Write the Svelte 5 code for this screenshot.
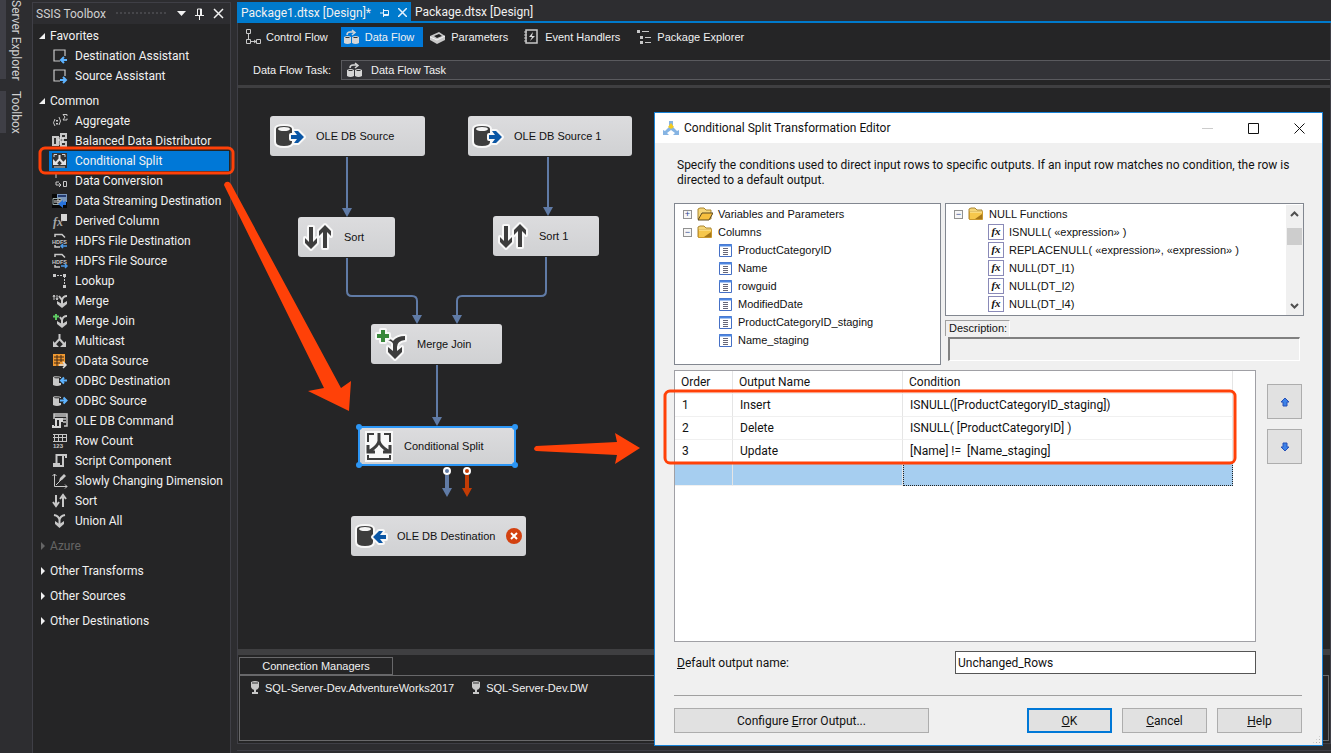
<script>
  const favorites = [
    { name: 'Destination Assistant', icon: 'destAssistant' },
    { name: 'Source Assistant', icon: 'sourceAssistant' }
  ];

  const common = [
    { name: 'Aggregate', icon: 'aggregate' },
    { name: 'Balanced Data Distributor', icon: 'balanced' },
    { name: 'Conditional Split', icon: 'split' },
    { name: 'Data Conversion', icon: 'conversion' },
    { name: 'Data Streaming Destination', icon: 'streaming' },
    { name: 'Derived Column', icon: 'derived' },
    { name: 'HDFS File Destination', icon: 'hdfsDest' },
    { name: 'HDFS File Source', icon: 'hdfsSource' },
    { name: 'Lookup', icon: 'lookup' },
    { name: 'Merge', icon: 'merge' },
    { name: 'Merge Join', icon: 'mergeJoin' },
    { name: 'Multicast', icon: 'multicast' },
    { name: 'OData Source', icon: 'odata' },
    { name: 'ODBC Destination', icon: 'odbcDest' },
    { name: 'ODBC Source', icon: 'odbcSource' },
    { name: 'OLE DB Command', icon: 'command' },
    { name: 'Row Count', icon: 'rowCount' },
    { name: 'Script Component', icon: 'script' },
    { name: 'Slowly Changing Dimension', icon: 'dimension' },
    { name: 'Sort', icon: 'sort' },
    { name: 'Union All', icon: 'union' }
  ];

  let groups = $state([
    { title: 'Favorites', open: true, items: favorites },
    { title: 'Common', open: true, items: common },
    { title: 'Azure', open: false, disabled: true, items: [] },
    { title: 'Other Transforms', open: false, items: [] },
    { title: 'Other Sources', open: false, items: [] },
    { title: 'Other Destinations', open: false, items: [] }
  ]);
  let selected = $state('Conditional Split');

  const views = [
    { name: 'Control Flow', icon: 'controlFlow' },
    { name: 'Data Flow', icon: 'dataFlow' },
    { name: 'Parameters', icon: 'parameters' },
    { name: 'Event Handlers', icon: 'events' },
    { name: 'Package Explorer', icon: 'explorer' }
  ];
  let view = $state('Data Flow');

  // positions on the design surface
  const nodes = [
    { name: 'OLE DB Source', icon: 'bigSource', x: 32, y: 28, w: 155 },
    { name: 'OLE DB Source 1', icon: 'bigSource', x: 230, y: 28, w: 164 },
    { name: 'Sort', icon: 'bigSort', x: 60, y: 129, w: 97 },
    { name: 'Sort 1', icon: 'bigSort', x: 255, y: 128, w: 106 },
    { name: 'Merge Join', icon: 'bigMerge', x: 133, y: 236, w: 131 },
    { name: 'Conditional Split', icon: 'bigSplit', x: 120, y: 338, w: 158, active: true },
    { name: 'OLE DB Destination', icon: 'bigDest', x: 113, y: 428, w: 175, error: true }
  ];

  const columns = ['ProductCategoryID', 'Name', 'rowguid', 'ModifiedDate', 'ProductCategoryID_staging', 'Name_staging'];
  const functions = ['ISNULL( «expression» )', 'REPLACENULL( «expression», «expression» )', 'NULL(DT_I1)', 'NULL(DT_I2)', 'NULL(DT_I4)'];
  const outputs = [
    { order: 1, name: 'Insert', condition: 'ISNULL([ProductCategoryID_staging])' },
    { order: 2, name: 'Delete', condition: 'ISNULL( [ProductCategoryID] )' },
    { order: 3, name: 'Update', condition: '[Name] !=  [Name_staging]' }
  ];
  let defaultOutput = $state('Unchanged_Rows');

  const hdfs = '<path d="M3 4V1.500h7l3 3M3 12v2h5" fill="none" stroke="#c8c8c8" stroke-width="1.5"/><text x="0" y="10.5" font-family="Liberation Sans" font-weight="bold" font-size="5.5" fill="#c8c8c8">HDFS</text>';
  const smallDrum = '<path d="M1 4q3-2 8 0v8q-4 2-8 0z" fill="#c8c8c8"/><ellipse cx="5" cy="4.5" rx="3" ry="1" fill="#555"/>';
  const blueLeft = '<path d="M7 5h9v5H7z" fill="#252526"/><path d="M15 7.500h-5M12 4.500l-3 3 3 3" fill="none" stroke="#5db3ff" stroke-width="2"/>';
  const blueRight = '<path d="M7 5h9v5H7z" fill="#252526"/><path d="M8 7.500h6M11.500 4.500l3 3-3 3" fill="none" stroke="#5db3ff" stroke-width="2"/>';
  const twoDrums = '<path d="M0 8q3.500-2 7 0v6q-3.500 2-7 0zM8 8q3.500-2 7 0v6q-3.500 2-7 0z" fill="#d6d6d6"/><path d="M1.500 8.500h4M9.500 8.500h4" stroke="#333"/><path d="M3 6q0-3 3-3h4M8 1l3 2.500L8 6" fill="none" stroke="#d6d6d6" stroke-width="1.500"/>';

  const icons = {
    destAssistant: '<path d="M8 13H2V2h11v6" fill="none" stroke="#c8c8c8" stroke-width="1.2"/><path d="M15 12h-5M12 9l-3 3 3 3" fill="none" stroke="#5db3ff" stroke-width="2"/>',
    sourceAssistant: '<path d="M8 13H2V2h11v6" fill="none" stroke="#c8c8c8" stroke-width="1.2"/><path d="M8 12h5M11 9l3 3-3 3" fill="none" stroke="#5db3ff" stroke-width="2"/>',
    aggregate: '<path d="M3 6q-3 4 0 7M7 4q3 4 0 8" fill="none" stroke="#c8c8c8"/><path d="M4 7h2v1.500H4zM4 10h2v1.500H4z" fill="#c8c8c8"/><path d="M15 3V1.500h-4L13 4l-2 3h4V5.500" fill="none" stroke="#c8c8c8"/>',
    balanced: '<path d="M0 3h7v10H0zM8 0h7v6H8zM8 8h7v6H8z" fill="#c8c8c8"/><path d="M2 5h2v6H2zM10 2h3v2h-3zM10 10h3v2h-3z" fill="#333"/><path d="M6 7h6M11 5v5M8 4v8" stroke="#eee"/>',
    split: '<path d="M0 0h15v15H0z" fill="#333"/><path d="M2 4V1.500h3M10 1.500h3V4M2 14h11" fill="none" stroke="#d6d6d6"/><path d="M7.500 2v4L4 10M7.500 6L11 10" fill="none" stroke="#e2e2e2" stroke-width="2"/><path d="M1 6v6h6zM14 6v6H8z" fill="#e2e2e2"/>',
    conversion: '<path d="M4 1v4M4 9v3h5M7 10l2 2-2 2M4 9h3" fill="none" stroke="#c8c8c8"/><path d="M11.500 8.500h3v5h-3z" fill="none" stroke="#c8c8c8"/>',
    streaming: '<path d="M0 1h15v14H0z" fill="#080808"/><path d="M5 1h10v8H5z" fill="#7997bd"/><path d="M6 3h8" stroke="#243c72" stroke-width="2"/><path d="M1 5.500h8v6H1z" fill="#111" stroke="#9aa"/><path d="M3 7v3M5 7h2v3H5zM8 7v3" fill="none" stroke="#ddd"/><path d="M14 8v4h-3v3l-5-4 5-4v2z" fill="#2873dc"/>',
    derived: '<path d="M9 1h6v7H9z" fill="#d6d6d6"/><text x="1" y="13" font-family="Liberation Serif" font-style="italic" font-weight="bold" font-size="12" fill="#a8a8a8">fx</text>',
    hdfsDest: hdfs + '<path d="M15 13H9M11 11l-2 2 2 2" fill="none" stroke="#4c9be8" stroke-width="1.500"/>',
    hdfsSource: hdfs + '<path d="M9 13h6M13 11l2 2-2 2" fill="none" stroke="#4c9be8" stroke-width="1.500"/>',
    lookup: '<path d="M2 2.500h11M12.500 3v10" stroke="#c8c8c8" stroke-dasharray="2 1"/><path d="M1 1h3v3H1zM11 1h3v3h-3zM11 12h3v3h-3z" fill="#c8c8c8"/>',
    merge: '<path d="M2 7V2M1 4l1-2 1 2M5 2v5M4 5l1 2 1-2" fill="none" stroke="#c8c8c8"/><path d="M7 3l3 4v5M15 3q-4 0-5 4" fill="none" stroke="#c8c8c8" stroke-width="2"/><path d="M5 8l5 3 5-3v3l-5 4-5-4z" fill="#c8c8c8"/>',
    mergeJoin: '<path d="M1 3.500h6M4 1v6" stroke="#5ecb63" stroke-width="2"/><path d="M8 4l2 3v5M15 3q-4 0-5 4" fill="none" stroke="#c8c8c8" stroke-width="2"/><path d="M5 8l5 3 5-3v3l-5 4-5-4z" fill="#c8c8c8"/>',
    multicast: '<path d="M7.500 1v5L3 11M7.500 6L12 11" fill="none" stroke="#c8c8c8" stroke-width="2"/><path d="M1 8v6h6zM14 8v6H8z" fill="#c8c8c8"/>',
    odata: '<path d="M1 1h12v12H1z" fill="#ef9831"/><path d="M2 4h10M2 7h10M2 10h6M5 2v11M9 2v7" stroke="#442b15"/><path d="M7 12h6M11 9l3 3-3 3" fill="none" stroke="#ddd" stroke-width="1.500"/>',
    odbcDest: smallDrum + blueLeft,
    odbcSource: smallDrum + blueRight,
    command: '<path d="M2 6V1h13v12h-3M2 3h13M11 6h3M11 9h3" fill="none" stroke="#c8c8c8" stroke-width="1.500"/><path d="M4 13V6h6v2H8v6H1v-2" fill="none" stroke="#d6d6d6" stroke-width="2"/>',
    rowCount: '<path d="M1 1.500h13M1 4.500h13M1 8.500h13M2.500 1v8M6.500 1v8M10.500 1v8M14.500 1v8" stroke="#c8c8c8"/><text x="1" y="15" font-family="Liberation Sans" font-weight="bold" font-size="6" fill="#c8c8c8">123</text>',
    script: '<path d="M4.500 11V2H14v3M11 2v11H2v-2h6" fill="none" stroke="#c8c8c8" stroke-width="2"/>',
    dimension: '<path d="M2.500 1v12.500H15M4 12l5-5" fill="none" stroke="#c8c8c8"/><path d="M0.500 3l2-2 2 2M13 11.500l2 2-2 2" fill="none" stroke="#c8c8c8"/><path d="M7 8l1-3 4-4 2 2-4 4z" fill="#c8c8c8"/>',
    sort: '<path d="M4 2v10M1 9l3 4 3-4M11 14V4M8 6l3-4 3 4" fill="none" stroke="#c8c8c8" stroke-width="2"/>',
    union: '<path d="M2 2q5 1 5.500 5v6M13 2q-5 1-5.500 5" fill="none" stroke="#c8c8c8" stroke-width="2"/><path d="M3 8l4.500 3L12 8v3l-4.500 4L3 11z" fill="#c8c8c8"/>',
    controlFlow: '<path d="M1.500.500h4v4h-4zM1.500 10.500h4v4h-4zM11.500 10.500h4v4h-4zM3.500 5v5M6 12.500h5M9 11l2 1.500-2 1.500" fill="none" stroke="#c8c8c8"/>',
    dataFlow: twoDrums,
    parameters: '<path d="M0 7l9-4 6 4v4l-8 4-7-4z" fill="#c8c8c8"/><path d="M4 7l5-2 3 2-5 2z" fill="#222"/><path d="M0 8l7 3 8-4" fill="none" stroke="#f4f4f4"/>',
    events: '<path d="M2 1h11v13H2z" fill="none" stroke="#c8c8c8" stroke-width="1.500"/><path d="M0 3h3M0 6h3M0 9h3M0 12h3" stroke="#c8c8c8"/><path d="M9 3L5 8h3l-2 4 5-5H8z" fill="#d8d8d8"/>',
    explorer: '<path d="M1 1h3v3H1zM4 7h3v3H4zM4 12h3v3H4z" fill="#c8c8c8"/><path d="M6 2.500h7M9 8.500h6M9 13.500h6" stroke="#c8c8c8"/>',
    connection: '<path d="M4 2q4-2 8 0v5q-1 3-4 3T4 7z" fill="#c8c8c8"/><path d="M5 3h6" stroke="#333"/><path d="M8 9v5M5 13h6" stroke="#c8c8c8" stroke-width="2"/>'
  };

  const halo = 'stroke="#f8f8f8" stroke-width="4" stroke-linejoin="round" paint-order="stroke"';
  const bigDrum = `<path d="M1 9q0-3 8-3t8 3v13q0 4-8 4t-8-4z" fill="#3d3d3d" ${halo}/><ellipse cx="9" cy="9" rx="6" ry="2" fill="#f5f5f5"/>`;
  const bigIcons = {
    bigSource: bigDrum + `<path d="M16 15h6l-3-4h4l6 6-6 6h-4l3-4h-6z" fill="#0a56a5" ${halo}/>`,
    bigDest: bigDrum + `<path d="M30 15h-6l3-4h-4l-6 6 6 6h4l-3-4h6z" fill="#0a56a5" ${halo}/>`,
    bigSort: `<path d="M6 6h4v15l4-4v5l-6 6-6-6v-5l4 4zM20 27h4V11l4 4v-5l-6-6-6 6v5l4-4z" fill="#3d3d3d" ${halo}/>`,
    bigMerge: `<path d="M12 9l5 4q4-5 12-5v4q-8 1-8 7v4l5-4v5l-7 7-7-7v-5l5 4v-7q0-2-5-4z" fill="#3d3d3d" ${halo}/><path d="M5 2h4v4h4v4H9v4H5v-4H1V6h4z" fill="#39883b" ${halo}/>`,
    bigSplit: '<path d="M2 1h28v31H2z" fill="#f8f8f8"/><path d="M5 12V4h6M21 4h6v8M5 25v4h22v-4" fill="none" stroke="#3d3d3d" stroke-width="2"/><path d="M16 3v8q-1 5-9 10M16 11q1 5 9 10M5 15v7h7M27 15v7h-7" fill="none" stroke="#3d3d3d" stroke-width="3"/>'
  };
</script>

{#snippet icon(name)}
  <svg class="icon" viewBox="0 0 16 16" aria-hidden="true">{@html icons[name]}</svg>
{/snippet}

{#snippet folder(open)}
  <svg class="icon" viewBox="0 0 16 16" aria-hidden="true">
    <path d="M1 13V3l2-1h4l2 2h5v9z" fill="#f5d679" stroke="#a98532" />
    {#if open}
      <path d="M1 14l4-7h11l-4 7z" fill="#f6bf3e" stroke="#5c4a20" />
    {:else}
      <path d="M1.500 13.500v-8h13v8z" fill="#f6c74c" stroke="#c9982e" />
      <path d="M14 8v5H7z" fill="#a77718" />
      <path d="M2 6h12" stroke="#fff0ad" />
    {/if}
  </svg>
{/snippet}

<div class="shell">
  <nav class="rail">
    <button class="server">Server Explorer</button>
    <button>Toolbox</button>
  </nav>

  <aside class="toolbox">
    <header class="toolbox-head">
      <span>SSIS Toolbox</span>
      <i class="grip"></i>
      <button aria-label="Window position"><svg width="9" height="5" viewBox="0 0 9 5"><path d="M0 0h9L4.500 5z" fill="#f1f1f1" /></svg></button>
      <button aria-label="Auto hide"><svg width="9" height="12" viewBox="0 0 9 12"><path d="M2.500 7V1h4v6M0 7.500h9M4.500 8v4M5.500 1v6" fill="none" stroke="#f1f1f1" /></svg></button>
      <button aria-label="Close toolbox"><svg width="11" height="11" viewBox="0 0 11 11"><path d="M1 1l9 9M10 1l-9 9" stroke="#f1f1f1" stroke-width="1.500" /></svg></button>
    </header>
    {#each groups as group}
      <section class="group">
        <button class="group-title" disabled={group.disabled} onclick={() => (group.open = !group.open)}>
          <svg width="8" height="8" viewBox="0 0 8 8" aria-hidden="true">
            <path d={group.open ? 'M7 1v6H1z' : 'M3 0l4 4-4 4z'} fill="currentColor" />
          </svg>
          {group.title}
        </button>
        {#if group.open}
          <ul>
            {#each group.items as item}
              <li>
                <button class="tool" class:selected={selected === item.name} onclick={() => (selected = item.name)}>
                  {@render icon(item.icon)}
                  {item.name}
                </button>
              </li>
            {/each}
          </ul>
        {/if}
      </section>
    {/each}
  </aside>

  <main class="main">
    <div class="tabs">
      <div class="tab current">
        <button>Package1.dtsx [Design]*</button>
        <button aria-label="Pin tab"><svg width="9" height="8" viewBox="0 0 9 8"><path d="M0 4h3M3.500 0v8M4 1.500h4.500v5H4M4 5.500h4" fill="none" stroke="#e6f3ff" /></svg></button>
        <button aria-label="Close tab"><svg width="9" height="9" viewBox="0 0 9 9"><path d="M0 0l9 9M9 0L0 9" stroke="#e6f3ff" stroke-width="1.500" /></svg></button>
      </div>
      <button class="tab">Package.dtsx [Design]</button>
    </div>

    <div class="designer">
      <div class="views">
        {#each views as v}
          <button class:current={view === v.name} onclick={() => (view = v.name)}>
            {@render icon(v.icon)}
            {v.name}
          </button>
        {/each}
      </div>

      <div class="task">
        <label for="task">Data Flow Task:</label>
        <div class="task-box">
          {@render icon('dataFlow')}
          <select id="task"><option>Data Flow Task</option></select>
        </div>
      </div>

      <div class="canvas">
        <svg class="links" width="420" height="480" aria-hidden="true">
          <defs>
            <marker id="head" markerUnits="userSpaceOnUse" markerWidth="10" markerHeight="10" refX="1" refY="5" orient="auto">
              <path d="M0 0l9 5-9 5z" fill="#607ba6" />
            </marker>
          </defs>
          <g fill="none" stroke="#607ba6" stroke-width="2" marker-end="url(#head)">
            <path d="M109 69v52" />
            <path d="M310 69v51" />
            <path d="M109 170v33q0 5 5 5h60q5 0 5 5v15" />
            <path d="M308 169v34q0 5-5 5h-79q-5 0-5 5v15" />
            <path d="M199 277v53" />
          </g>
          <path d="M207 387h4v13h3l-5 9-5-9h3z" fill="#607ba6" />
          <path d="M227 387h4v13h3l-5 9-5-9h3z" fill="#c33c05" />
          <circle cx="209" cy="383" r="3" fill="#607ba6" stroke="#fff" stroke-width="2" />
          <circle cx="229" cy="383" r="3" fill="#c33c05" stroke="#fff" stroke-width="2" />
        </svg>
        {#each nodes as node}
          <div class="node" class:active={node.active} style="left: {node.x}px; top: {node.y}px; width: {node.w}px">
            <svg class="node-icon" viewBox="0 0 32 32" aria-hidden="true">{@html bigIcons[node.icon]}</svg>
            <span>{node.name}</span>
            {#if node.error}
              <svg class="error" viewBox="0 0 16 16" aria-label="Error"><circle cx="8" cy="8" r="8" fill="#d34110" /><path d="M5 5l6 6M11 5l-6 6" stroke="#fff" stroke-width="2" /></svg>
            {/if}
            {#if node.active}
              <i class="handle tl"></i><i class="handle tr"></i><i class="handle bl"></i><i class="handle br"></i>
            {/if}
          </div>
        {/each}
      </div>

      <section class="connections">
        <button class="connections-tab">Connection Managers</button>
        <div class="connections-list">
          <span>{@render icon('connection')}SQL-Server-Dev.AdventureWorks2017</span>
          <span>{@render icon('connection')}SQL-Server-Dev.DW</span>
        </div>
      </section>
    </div>
    <div class="dock"></div>
  </main>

  <div class="dialog" role="dialog" aria-labelledby="dialog-title">
    <header class="title-bar">
      <svg class="icon" viewBox="0 0 16 16" aria-hidden="true">
        <path d="M6 1h4v5H6zM6 7l-4 4-2-1v5h6l-2-2 4-3 4 3-2 2h6v-5l-2 1-4-4z" fill="#86b4e3" />
        <path d="M8 3l3 4-3 2-3-2z" fill="#f3cb20" />
      </svg>
      <h1 id="dialog-title">Conditional Split Transformation Editor</h1>
      <button aria-label="Minimize" disabled><svg width="11" height="11" viewBox="0 0 11 11"><path d="M0 5.500h11" stroke="#ccc" /></svg></button>
      <button aria-label="Maximize"><svg width="11" height="11" viewBox="0 0 11 11"><path d="M.500.500h10v10H.500z" fill="none" stroke="#111" /></svg></button>
      <button aria-label="Close"><svg width="11" height="11" viewBox="0 0 11 11"><path d="M.500.500l10 10M10.500.500l-10 10" stroke="#111" /></svg></button>
    </header>

    <div class="dialog-body">
      <p class="intro">
        Specify the conditions used to direct input rows to specific outputs. If an input row matches no condition, the row is<br />
        directed to a default output.
      </p>

      <div class="panes">
        <ul class="tree">
          <li><button class="expander" aria-label="Expand">+</button>{@render folder(true)}Variables and Parameters</li>
          <li><button class="expander" aria-label="Collapse">−</button>{@render folder(false)}Columns</li>
          {#each columns as column}
            <li class="leaf">
              <svg width="13" height="13" viewBox="0 0 13 13" aria-hidden="true">
                <path d="M.500.500h12v12H.500z" fill="#fff" stroke="#456fc5" />
                <path d="M0 1.500h13" stroke="#4d86e0" stroke-width="2" />
                <path d="M4 4.500h5M4 6.500h5M4 8.500h5M4 10.500h5" stroke="#667" />
              </svg>
              {column}
            </li>
          {/each}
        </ul>

        <div class="functions">
          <div class="function-list">
            <ul>
              <li><button class="expander" aria-label="Collapse">−</button>{@render folder(false)}NULL Functions</li>
              {#each functions as fn}
                <li class="leaf"><i class="fx">fx</i>{fn}</li>
              {/each}
            </ul>
            <div class="scrollbar">
              <svg width="9" height="6" viewBox="0 0 9 6"><path d="M1 5l3.500-3.500L8 5" fill="none" stroke="#505050" stroke-width="2" /></svg>
              <i class="thumb"></i>
              <svg width="9" height="6" viewBox="0 0 9 6"><path d="M1 1l3.500 3.500L8 1" fill="none" stroke="#505050" stroke-width="2" /></svg>
            </div>
          </div>
          <label class="description-label" for="description">Description:</label>
          <input id="description" class="description" readonly />
        </div>
      </div>

      <div class="grid-row">
        <div class="grid">
          <table>
            <colgroup><col class="c-order" /><col class="c-name" /><col /></colgroup>
            <thead>
              <tr><th>Order</th><th>Output Name</th><th>Condition</th></tr>
            </thead>
            <tbody>
              {#each outputs as row}
                <tr><td>{row.order}</td><td>{row.name}</td><td>{row.condition}</td></tr>
              {/each}
              <tr class="new"><td></td><td></td><td></td></tr>
            </tbody>
          </table>
        </div>
        <div class="movers">
          <button aria-label="Move up"><svg width="10" height="10" viewBox="0 0 10 10"><path d="M5 1l4 4H7v4H3V5H1z" fill="#3d82e8" stroke="#2650b8" /></svg></button>
          <button aria-label="Move down"><svg width="10" height="10" viewBox="0 0 10 10"><path d="M5 9l4-4H7V1H3v4H1z" fill="#3d82e8" stroke="#2650b8" /></svg></button>
        </div>
      </div>

      <div class="default-row">
        <label for="default-output"><u>D</u>efault output name:</label>
        <input id="default-output" bind:value={defaultOutput} />
      </div>

      <footer class="actions">
        <button class="configure">Configure <u>E</u>rror Output...</button>
        <button class="ok"><u>O</u>K</button>
        <button><u>C</u>ancel</button>
        <button><u>H</u>elp</button>
      </footer>
    </div>
    <i class="resize"></i>
  </div>

  <svg class="marks" width="1300" height="500" aria-hidden="true">
    <g fill="none" stroke="#ff4108" stroke-width="3">
      <rect x="40" y="148" width="193" height="25" rx="5" />
      <rect x="665" y="391" width="570" height="72" rx="5" />
    </g>
    <g fill="#ff4108">
      <path d="M224 185q1-4 5-3l2 2 110 204 10-7-2 30-41-20 16-3z" />
      <path d="M536 446l81-4-2-9 25 15-25 16 2-9-81-4q-4-2 0-5z" />
    </g>
  </svg>
</div>

<style>
  :global(body) {
    margin: 0;
    background: #2d2d30;
  }

  .shell {
    --ui: Roboto, 'Open Sans', sans-serif;
    --sans: 'Liberation Sans', Arial, sans-serif;
    position: relative;
    display: flex;
    min-height: 100vh;
    overflow: hidden;
    background: #2d2d30;
    color: #f1f1f1;
    font: 12px/16px var(--ui);
  }

  .shell :global(*) {
    box-sizing: border-box;
  }

  button,
  input,
  select {
    margin: 0;
    padding: 0;
    border: 0;
    border-radius: 0;
    background: none;
    color: inherit;
    font: inherit;
  }

  ul {
    list-style: none;
    margin: 0;
    padding: 0;
  }

  svg {
    flex: none;
  }

  .icon {
    width: 16px;
    height: 16px;
  }

  /* left rail */
  .rail {
    display: flex;
    flex-direction: column;
    align-items: flex-start;
    gap: 12px;
    width: 32px;
    flex: none;
  }

  .rail button {
    writing-mode: vertical-rl;
    width: 26px;
    height: 42px;
    border-left: 6px solid #3f3f46;
    color: #d0d0d0;
    text-align: left;
    white-space: nowrap;
  }

  .rail .server {
    height: 79px;
  }

  /* toolbox */
  .toolbox {
    width: 199px;
    flex: none;
    margin: 2px 6px 0 0;
    border: 1px solid #3f3f46;
    border-bottom: 0;
    background: #252526;
  }

  .toolbox-head {
    display: flex;
    align-items: center;
    gap: 9px;
    height: 21px;
    padding: 0 6px 0 3px;
    margin-bottom: 2px;
    background: #2d2d30;
    color: #d0d0d0;
  }

  .toolbox-head button {
    display: flex;
  }

  .grip {
    flex: 1;
    height: 5px;
    background: radial-gradient(#46464a 1px, transparent 1px) 0 0 / 4px 4px;
  }

  .group {
    margin-bottom: 5px;
  }

  .group-title {
    display: flex;
    align-items: center;
    gap: 4px;
    width: 100%;
    height: 20px;
    padding-left: 5px;
    white-space: nowrap;
  }

  .group-title:disabled {
    color: #656565;
  }

  .tool {
    display: flex;
    align-items: center;
    gap: 7px;
    width: 180px;
    height: 20px;
    margin-left: 16px;
    padding-left: 3px;
    white-space: nowrap;
  }

  .tool.selected {
    background: #0078d7;
  }

  /* document area */
  .main {
    display: flex;
    flex-direction: column;
    flex: 1;
    min-width: 0;
    padding-top: 2px;
  }

  .tabs {
    display: flex;
    height: 21px;
    border-bottom: 2px solid #007acc;
  }

  .tab {
    display: flex;
    align-items: center;
    gap: 9px;
    padding: 0 4px;
    white-space: nowrap;
  }

  .tab.current {
    height: 21px;
    background: #007acc;
  }

  .tab.current button {
    display: flex;
  }

  .designer {
    display: flex;
    flex-direction: column;
    flex: 1;
    border: 1px solid #3f3f46;
    border-top: 0;
    background: #252526;
    font: 11px/14px var(--sans);
  }

  .views {
    display: flex;
    gap: 4px;
    padding: 4px 4px 0;
  }

  .views button {
    display: flex;
    align-items: center;
    gap: 5px;
    height: 20px;
    padding: 0 9px 0 3px;
  }

  .views .current {
    background: #0078d7;
  }

  .task {
    display: flex;
    align-items: center;
    gap: 10px;
    padding: 13px 0 5px 15px;
  }

  .task-box {
    display: flex;
    align-items: center;
    gap: 8px;
    flex: 1;
    height: 20px;
    padding-left: 5px;
    border: 1px solid #5a5a5e;
    border-right: 0;
    background: #333337;
  }

  .task-box select {
    appearance: none;
    flex: 1;
  }

  .canvas {
    position: relative;
    flex: 1;
    min-height: 561px;
    border-top: 3px solid #3f3f41;
    border-bottom: 6px solid #3f3f41;
  }

  .links {
    position: absolute;
    left: 0;
    top: 0;
  }

  .node {
    position: absolute;
    display: flex;
    align-items: center;
    gap: 9px;
    height: 40px;
    padding-left: 5px;
    border-radius: 3px;
    background: linear-gradient(#dcdcde, #d0d1d3);
    color: #111;
  }

  .node-icon {
    width: 32px;
    height: 32px;
    overflow: visible;
  }

  .node.active {
    padding-left: 3px;
    border: 2px solid #2c96f5;
  }

  .error {
    width: 16px;
    height: 16px;
    margin-left: 2px;
  }

  .handle {
    position: absolute;
    width: 6px;
    height: 6px;
    border-radius: 50%;
    background: #2c96f5;
  }

  .tl { left: -4px; top: -4px; }
  .tr { right: -4px; top: -4px; }
  .bl { left: -4px; bottom: -4px; }
  .br { right: -4px; bottom: -4px; }

  .connections {
    padding: 2px 1px 2px;
  }

  .connections-tab {
    display: block;
    width: 154px;
    height: 18px;
    border: 1px solid #68686a;
  }

  .connections-list {
    display: flex;
    gap: 14px;
    height: 66px;
    padding: 4px 7px;
    border: 1px solid #68686a;
  }

  .connections-list span {
    display: flex;
    align-items: center;
    gap: 2px;
    height: 16px;
  }

  .dock {
    height: 3px;
    margin-top: 6px;
    border-top: 1px solid #3f3f46;
  }

  /* editor window */
  .dialog {
    position: absolute;
    left: 654px;
    top: 112px;
    width: 669px;
    border: 1px solid #1883d7;
    background: #f0f0f0;
    color: #111;
  }

  .title-bar {
    display: flex;
    align-items: center;
    height: 30px;
    padding: 0 17px 0 8px;
    background: #fff;
  }

  .title-bar h1 {
    flex: 1;
    margin: 0 0 0 5px;
    font: inherit;
  }

  .title-bar button {
    display: flex;
    margin-left: 35px;
  }

  .dialog-body {
    padding: 15px 20px 12px 19px;
  }

  .intro {
    margin: 0 0 15px 3px;
    line-height: 15px;
    white-space: nowrap;
  }

  .panes {
    display: flex;
    gap: 4px;
    height: 162px;
    margin-right: -2px;
    font: 11px/18px var(--sans);
  }

  .tree,
  .function-list {
    padding-top: 1px;
    border: 1px solid #828790;
    background: #fff;
  }

  .tree {
    width: 267px;
  }

  .panes li {
    display: flex;
    align-items: center;
    gap: 5px;
    height: 18px;
    padding-left: 8px;
    white-space: nowrap;
  }

  .tree .leaf {
    gap: 6px;
    padding-left: 44px;
  }

  .expander {
    width: 9px;
    height: 9px;
    border: 1px solid #919191;
    background: #f6f6f6;
    color: #2d4590;
    font: 9px/7px var(--sans);
  }

  .functions {
    flex: 1;
    min-width: 0;
  }

  .function-list {
    display: flex;
    height: 113px;
    overflow: hidden;
  }

  .function-list ul {
    flex: 1;
  }

  .function-list .leaf {
    padding-left: 42px;
  }

  .fx {
    width: 16px;
    height: 16px;
    border: 1px solid #8a8ab8;
    font: italic bold 11px/13px 'Liberation Serif', serif;
    text-align: center;
  }

  .scrollbar {
    display: flex;
    flex-direction: column;
    align-items: center;
    width: 17px;
    padding: 6px 1px;
    background: #f0f0f0;
  }

  .thumb {
    width: 15px;
    height: 17px;
    margin: 11px 0 auto;
    background: #cdcdcd;
  }

  .description-label {
    display: block;
    width: 65px;
    height: 16px;
    margin: 4px 0 1px;
    padding-left: 3px;
    border: 1px solid #a0a0a0;
    border-right-color: #fff;
    border-bottom: 0;
    line-height: 15px;
  }

  .description {
    display: block;
    width: calc(100% - 7px);
    height: 24px;
    margin-left: 3px;
    border: 1px solid #fff;
    border-top: 2px solid #808080;
    border-left: 2px solid #808080;
  }

  .grid-row {
    display: flex;
    gap: 11px;
    margin-top: 5px;
  }

  .grid {
    flex: 1;
    height: 272px;
    border: 1px solid #a0a0a5;
    background: #fff;
  }

  table {
    width: 558px;
    table-layout: fixed;
    border-collapse: separate;
    border-spacing: 0;
  }

  .c-order { width: 58px; }
  .c-name { width: 170px; }

  th,
  td {
    height: 23px;
    padding: 0 0 0 7px;
    border-right: 1px solid #e5e5e5;
    border-bottom: 1px solid #f0f0f0;
    font-weight: normal;
    text-align: left;
    white-space: pre;
  }

  th {
    padding-left: 6px;
  }

  .new td {
    background: #a6cef0;
  }

  .new td:last-child {
    border: 1px dotted #222;
  }

  .movers {
    display: flex;
    flex-direction: column;
    gap: 10px;
    padding-top: 14px;
  }

  .movers button {
    display: grid;
    place-items: center;
    width: 35px;
    height: 35px;
    border: 1px solid #adadad;
    background: #e1e1e1;
  }

  .default-row {
    display: flex;
    align-items: center;
    justify-content: space-between;
    margin-top: 9px;
    padding: 0 46px 21px 3px;
    border-bottom: 1px solid #a0a0a0;
  }

  .default-row input {
    width: 301px;
    height: 23px;
    padding: 0 2px;
    border: 1px solid #555;
    background: #fff;
  }

  .actions {
    display: flex;
    gap: 10px;
    padding-top: 12px;
  }

  .actions button {
    width: 85px;
    height: 25px;
    border: 1px solid #adadad;
    background: #e1e1e1;
  }

  .actions .configure {
    width: 255px;
    margin-right: auto;
  }

  .actions .ok {
    border: 2px solid #0078d7;
  }

  .resize {
    position: absolute;
    right: 1px;
    bottom: 1px;
    width: 9px;
    height: 9px;
    background: radial-gradient(#b0b0b0 1px, transparent 1px) 0 0 / 3px 3px;
    clip-path: polygon(100% 0, 100% 100%, 0 100%);
  }

  /* call-outs over the windows */
  .marks {
    position: absolute;
    left: 0;
    top: 0;
    pointer-events: none;
  }
</style>
